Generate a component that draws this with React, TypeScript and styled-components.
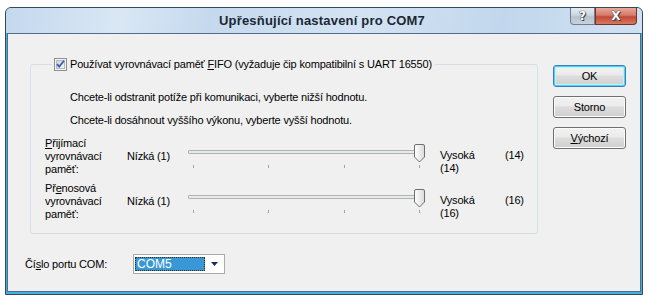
import styled, { createGlobalStyle } from "styled-components";

const GlobalStyle = createGlobalStyle`
  body {
    margin: 0;
    background: #ffffff;
    font-family: "Liberation Sans", Arial, sans-serif;
    font-size: 11px;
    letter-spacing: -0.18px;
    color: #000;
  }
`;

const Page = styled.div`
  padding: 7px 0 0 5px;
`;

const Window = styled.div`
  width: 638px;
  height: 288px;
  box-sizing: border-box;
  border: 1px solid #34475d;
  border-radius: 6px 6px 0 0;
  background: #3fb1df;
  display: flex;
  flex-direction: column;
  overflow: hidden;
`;

const TitleBar = styled.div`
  height: 25px;
  flex: none;
  display: flex;
  align-items: flex-start;
  background: linear-gradient(
    100deg,
    #c4d8ee 0%,
    #d9e7f5 18%,
    #c5d9ee 32%,
    #d3e3f3 55%,
    #c2d7ed 78%,
    #d0e1f2 100%
  );
`;

const Title = styled.div`
  flex: 1;
  padding-left: 68px;
  line-height: 25px;
  text-align: center;
  font-size: 13px;
  font-weight: bold;
  letter-spacing: 0.2px;
  color: #1b2733;
`;

const CaptionButtons = styled.div`
  display: flex;
  margin-right: 5px;
`;

const CaptionButton = styled.div<{ $close?: boolean }>`
  width: ${(p) => (p.$close ? 42 : 25)}px;
  height: 17px;
  box-sizing: border-box;
  display: flex;
  align-items: center;
  justify-content: center;
  border: 1px solid ${(p) => (p.$close ? "#6e342c" : "#6f7f90")};
  border-top: none;
  border-radius: ${(p) => (p.$close ? "0 0 4px 0" : "0 0 0 4px")};
  background: ${(p) =>
    p.$close
      ? "linear-gradient(180deg, #e9a99a 0%, #d77a68 45%, #c24a38 55%, #d8775f 100%)"
      : "linear-gradient(180deg, #e6ebf1 0%, #ccd5df 45%, #b6c2cf 55%, #c8d2dc 100%)"};
  color: #fff;
  font-family: "DejaVu Sans", sans-serif;
  font-weight: bold;
  font-size: 12px;
  letter-spacing: 0;
  text-shadow: 0 0 1px #3a3a3a, 0 0 1px #3a3a3a, 1px 1px 0 #4a4a4a;
`;

const Client = styled.div`
  flex: 1;
  margin: 0 1px 2px;
  background: #f0f0f0;
  border: 1px solid #4f6c8a;
  display: flex;
`;

const LeftColumn = styled.div`
  padding: 23px 0 0 22px;
  display: flex;
  flex-direction: column;
`;

const RightColumn = styled.div`
  padding: 31px 0 0 15px;
  display: flex;
  flex-direction: column;
  gap: 9px;
`;

const Group = styled.fieldset`
  margin: 0;
  width: 508px;
  box-sizing: border-box;
  padding: 0 0 12px 0;
  border: 1px solid #d5dfe5;
  border-radius: 3px;
`;

const Legend = styled.legend`
  margin-left: 21px;
  padding: 0 3px 0 2px;
  display: flex;
  align-items: center;
  gap: 3px;
  line-height: 14px;
  height: 14px;
`;

const Hint = styled.div<{ $top: number }>`
  margin-top: ${(p) => p.$top}px;
  padding-left: 39px;
  line-height: 14px;
`;

const SliderRow = styled.div<{ $top: number }>`
  margin-top: ${(p) => p.$top}px;
  padding-left: 14px;
  display: grid;
  grid-template-columns: 82px 57px 256px 65px auto;
  align-items: center;
  line-height: 13px;
`;

const HighLabel = styled.div`
  align-self: start;
  margin-top: 12px;
`;

const SliderBox = styled.div`
  position: relative;
  height: 26px;
`;

const Track = styled.div`
  position: absolute;
  left: 4px;
  right: 16px;
  top: 6px;
  height: 2px;
  border: 1px solid #b2b2b2;
  border-radius: 1px;
  background: #e7eaea;
`;

const Thumb = styled.svg`
  position: absolute;
  left: 230px;
  top: 0;
`;

const Ticks = styled.div`
  padding: 21px 20px 0 9px;
  display: flex;
  justify-content: space-between;
`;

const Tick = styled.span`
  width: 1px;
  height: 3px;
  background: #a3a3a3;
`;

const ComRow = styled.div`
  margin: 20px 0 0 -5px;
  display: flex;
  align-items: center;
`;

const ComLabel = styled.div`
  width: 108px;
`;

const Combo = styled.div`
  width: 92px;
  height: 20px;
  box-sizing: border-box;
  border: 1px solid #a9abb0;
  background: #fff;
  display: flex;
  align-items: center;
  padding: 0 0 0 1px;
`;

const ComboValue = styled.div`
  width: 70px;
  height: 14px;
  box-sizing: border-box;
  border: 1px dotted #3a2a10;
  background: #3a97d6;
  color: #fff;
  font-size: 12px;
  line-height: 12px;
  letter-spacing: 0;
  padding-left: 1px;
`;

const ComboArrow = styled.div`
  flex: 1;
  display: flex;
  justify-content: center;
  align-items: center;
`;

const Button = styled.button<{ $focused?: boolean }>`
  width: 73px;
  height: 22px;
  padding: 0;
  font-family: inherit;
  font-size: 11px;
  letter-spacing: inherit;
  color: #000;
  border-radius: 3px;
  border: 1px solid ${(p) => (p.$focused ? "#3c7fb1" : "#707070")};
  background: linear-gradient(180deg, #f2f2f2 0%, #ebebeb 45%, #dddddd 50%, #cfcfcf 100%);
  box-shadow: ${(p) =>
    p.$focused ? "inset 0 0 0 1px #48d7fb, inset 0 0 0 2px #c5eefb" : "inset 0 0 0 1px #fbfbfb"};
`;

function Checkbox() {
  return (
    <svg width="13" height="13" viewBox="0 0 13 13">
      <defs>
        <linearGradient id="cbg" x1="0" y1="0" x2="1" y2="1">
          <stop offset="0" stopColor="#cfd3d8" />
          <stop offset="1" stopColor="#f6f6f6" />
        </linearGradient>
      </defs>
      <rect x="0.5" y="0.5" width="12" height="12" fill="#f4f4f4" stroke="#8e8f8f" />
      <rect x="2.5" y="2.5" width="8" height="8" fill="url(#cbg)" stroke="#b6b9bd" />
      <path d="M3 6.2 L5.2 8.6 L10 2.8" fill="none" stroke="#3a5fb0" strokeWidth="1.8" />
    </svg>
  );
}

function Slider() {
  return (
    <SliderBox>
      <Track />
      <Thumb width="11" height="19" viewBox="0 0 11 19">
        <defs>
          <linearGradient id="thg" x1="0" y1="0" x2="1" y2="0">
            <stop offset="0" stopColor="#ffffff" />
            <stop offset="1" stopColor="#dadada" />
          </linearGradient>
        </defs>
        <path
          d="M0.5 2 Q0.5 0.5 2 0.5 H9 Q10.5 0.5 10.5 2 V13 L5.5 18 L0.5 13 Z"
          fill="url(#thg)"
          stroke="#6f6f6f"
        />
      </Thumb>
      <Ticks>
        <Tick />
        <Tick />
        <Tick />
        <Tick />
      </Ticks>
    </SliderBox>
  );
}

export default function App() {
  return (
    <Page>
      <GlobalStyle />
      <Window>
        <TitleBar>
          <Title>Upřesňující nastavení pro COM7</Title>
          <CaptionButtons>
            <CaptionButton>?</CaptionButton>
            <CaptionButton $close>X</CaptionButton>
          </CaptionButtons>
        </TitleBar>
        <Client>
          <LeftColumn>
            <Group>
              <Legend>
                <Checkbox />
                <span>
                  Používat vyrovnávací paměť <u>F</u>IFO (vyžaduje čip kompatibilní s UART 16550)
                </span>
              </Legend>
              <Hint $top={19}>Chcete-li odstranit potíže při komunikaci, vyberte nižší hodnotu.</Hint>
              <Hint $top={9}>Chcete-li dosáhnout vyššího výkonu, vyberte vyšší hodnotu.</Hint>
              <SliderRow $top={10}>
                <div>
                  <u>P</u>řijímací
                  <br />
                  vyrovnávací
                  <br />
                  paměť:
                </div>
                <div>Nízká (1)</div>
                <Slider />
                <HighLabel>
                  Vysoká
                  <br />
                  (14)
                </HighLabel>
                <HighLabel>(14)</HighLabel>
              </SliderRow>
              <SliderRow $top={6}>
                <div>
                  Př<u>e</u>nosová
                  <br />
                  vyrovnávací
                  <br />
                  paměť:
                </div>
                <div>Nízká (1)</div>
                <Slider />
                <HighLabel>
                  Vysoká
                  <br />
                  (16)
                </HighLabel>
                <HighLabel>(16)</HighLabel>
              </SliderRow>
            </Group>
            <ComRow>
              <ComLabel>
                Čí<u>s</u>lo portu COM:
              </ComLabel>
              <Combo>
                <ComboValue>COM5</ComboValue>
                <ComboArrow>
                  <svg width="7" height="4" viewBox="0 0 7 4">
                    <path d="M0 0 H7 L3.5 4 Z" fill="#1a2b5e" />
                  </svg>
                </ComboArrow>
              </Combo>
            </ComRow>
          </LeftColumn>
          <RightColumn>
            <Button $focused>OK</Button>
            <Button>Storno</Button>
            <Button>
              <u>V</u>ýchozí
            </Button>
          </RightColumn>
        </Client>
      </Window>
    </Page>
  );
}
